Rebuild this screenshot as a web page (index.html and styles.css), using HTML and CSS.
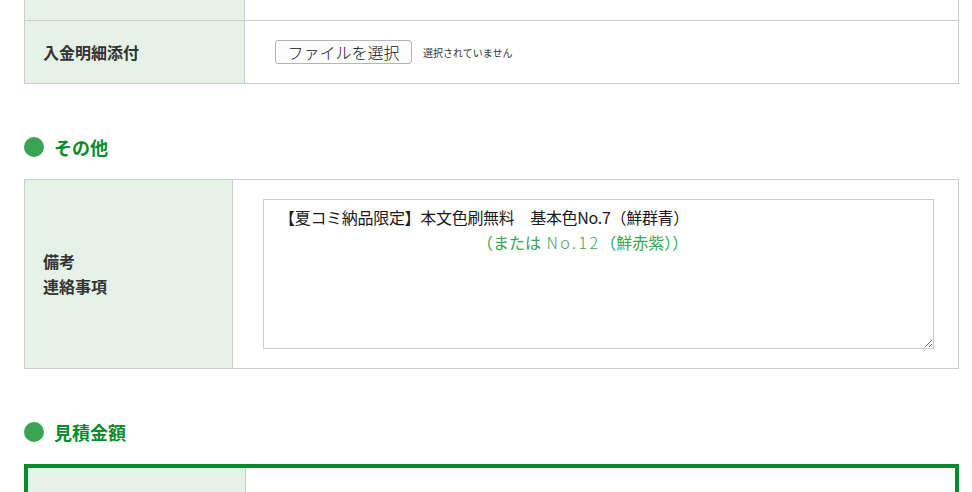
FILE: index.html
```html
<!DOCTYPE html>
<html lang="ja">
<head>
<meta charset="utf-8">
<title>フォーム</title>
<link rel="stylesheet" href="styles.css">
</head>
<body>
<div class="page">
  <div class="ftable t1">
    <div class="row row-cut"><div class="th"></div><div class="td"></div></div>
    <div class="row row-file">
      <div class="th">入金明細添付</div>
      <div class="td">
        <button class="file-btn" type="button">ファイルを選択</button>
        <span class="file-none">選択されていません</span>
      </div>
    </div>
  </div>

  <h2 class="sec"><span class="dot"></span>その他</h2>

  <div class="ftable t2">
    <div class="row">
      <div class="th"><span>備考<br>連絡事項</span></div>
      <div class="td">
        <div class="ta-wrap">
          <textarea class="ta">【夏コミ納品限定】本文色刷無料　基本色No.7（鮮群青）</textarea>
          <span class="ta-note">（または <span class="mono">No.12</span>（鮮赤紫））</span>
        </div>
      </div>
    </div>
  </div>

  <h2 class="sec"><span class="dot"></span>見積金額</h2>

  <div class="ftable t3">
    <div class="row"><div class="th"></div><div class="td"></div></div>
  </div>
</div>
</body>
</html>
```

FILE: styles.css
```css
* { box-sizing: border-box; }
html, body { margin: 0; padding: 0; background: #fff; }
body {
  font-family: "Noto Sans CJK JP", "Noto Sans", sans-serif;
  color: #333;
  overflow: hidden;
}
.page {
  padding: 0 13px 0 24px;
}
.ftable {
  border: 1px solid #ccc;
  background: #fff;
}
.t1 { border-top: none; }
.row {
  display: grid;
}
.row + .row { border-top: 1px solid #ccc; }
.t1 .row { grid-template-columns: 220px 1fr; }
.t2 .row { grid-template-columns: 208px 1fr; }
.t3 .row { grid-template-columns: 218px 1fr; }

.th {
  background: #e4f2e8;
  border-right: 1px solid #ccc;
  display: flex;
  align-items: center;
  padding-left: 18px;
  font-size: 16px;
  line-height: 25px;
  font-weight: bold;
  color: #333;
}
.td {
  display: flex;
  align-items: center;
}
.row-cut { height: 20px; }
.row-file { height: 63px; }
.row-file .td { padding-left: 30px; }

.file-btn {
  height: 24px;
  width: 137px;
  padding: 0;
  border: 1px solid #b5b5b5;
  border-radius: 3px;
  background: #fdfdfd;
  font-family: "Noto Sans CJK JP", sans-serif;
  font-size: 16px;
  line-height: 22px;
  font-weight: 300;
  color: #111;
}
.file-none {
  margin-left: 11px;
  font-size: 10px;
  color: #333;
}

.sec {
  margin: 51px 0 20px;
  display: flex;
  align-items: center;
  gap: 10px;
  font-size: 18px;
  line-height: 24px;
  font-weight: bold;
  color: #0b8b2c;
}
.dot {
  width: 20px;
  height: 20px;
  border-radius: 50%;
  background: #3aa354;
}

.t2 .td {
  padding: 19px 24px 19px 30px;
}
.ta-wrap {
  position: relative;
  width: 100%;
}
.ta {
  display: block;
  width: 100%;
  height: 150px;
  margin: 0;
  border: 1px solid #ccc;
  padding: 5px 15px;
  font-family: "Noto Sans CJK JP", sans-serif;
  font-size: 16px;
  line-height: 25px;
  letter-spacing: -0.3px;
  color: #1a1a1a;
  resize: both;
  background: #fff;
}
.ta-note {
  position: absolute;
  top: 31px;
  left: 214px;
  font-size: 16px;
  line-height: 25px;
  color: #3aa354;
  white-space: pre;
}
.mono {
  font-family: "Noto Sans CJK JP", sans-serif;
  letter-spacing: 2.4px;
  margin-left: 2px;
  font-weight: 300;
}

.t3 {
  border: 4px solid #0a8a2a;
  border-bottom: none;
}
.t3 .row { height: 40px; }
```
